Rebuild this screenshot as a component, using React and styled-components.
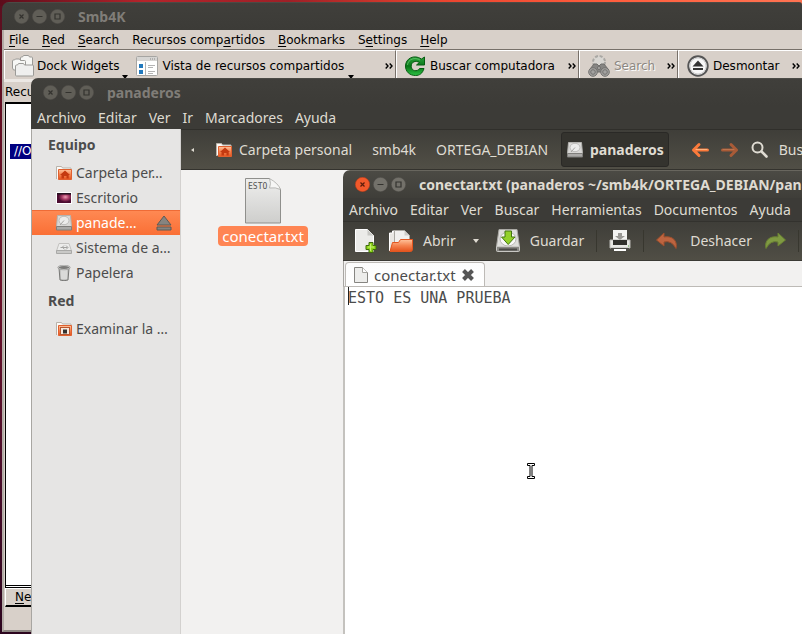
import React from "react";
import styled, { createGlobalStyle, css } from "styled-components";

const GlobalStyle = createGlobalStyle`
  * { box-sizing: border-box; }
  html, body { margin: 0; height: 100%; }
  #root { height: 100%; }
  body { overflow: hidden; background: #2c001e; }
  button, textarea { font: inherit; color: inherit; }
  svg { display: block; flex: none; }
`;

const ubuntu = '"Noto Sans", "Open Sans", sans-serif';
const dejavu = '"DejaVu Sans", sans-serif';

const Desktop = styled.main`
  position: relative;
  min-height: 100vh;
  overflow: hidden;
  background:
    linear-gradient(90deg, #5c0c1b 0, #b5242b 18%, #9e2027 36%, #e9442f 55%, #ff5c3c 75%, #ff7352 100%) top / 100% 6px no-repeat,
    linear-gradient(#5c0f1f, #6b1129 45%, #4a0d2a 75%, #2c051e);
`;

/* ---------- shared pieces ---------- */

const WindowFrame = styled.section`
  position: absolute;
  left: ${(p) => p.$left}px;
  top: ${(p) => p.$top}px;
  right: 0;
  bottom: ${(p) => p.$bottom || 0}px;
  display: flex;
  flex-direction: column;
  overflow: hidden;
  border-radius: 7px ${(p) => (p.$bottom ? 3 : 0)}px 0 0;
  font-family: ${ubuntu};
  font-size: 14px;
  white-space: nowrap;
`;

const TitleBar = styled.header`
  flex: none;
  display: flex;
  align-items: center;
  gap: 3px;
  height: 28px;
  padding: 0 12px 1px;
  border-top: 1px solid ${(p) => (p.$active ? "#68665e" : "#4b4a45")};
  background: linear-gradient(${(p) => (p.$active ? "#4b4a44, #3f3e39" : "#403f3b, #3c3b37")});
  color: ${(p) => (p.$active ? "#dfdbd2" : "#807d78")};
`;

const Title = styled.h1`
  margin: 0;
  padding-left: 10px;
  font-size: 14px;
  font-weight: 700;
`;

const WindowButton = styled.button`
  flex: none;
  width: 15px;
  height: 15px;
  padding: 0;
  border: 0;
  background: none;
`;

const MenuBar = styled.nav`
  flex: none;
  display: flex;
  align-items: center;
  gap: 12px;
  height: 23px;
  padding: 0 6px;
  background: #3c3b37;
  color: #dfdbd2;
`;

const PlainButton = styled.button`
  display: flex;
  align-items: center;
  flex: none;
  padding: 0 ${(p) => p.$pad || 0}px;
  border: 0;
  background: none;
  gap: ${(p) => p.$gap || 0}px;
`;

const Controls = ({ active }) => {
  const kinds = [
    ["Cerrar", "M5.5 5.5l4 4M9.5 5.5l-4 4"],
    ["Minimizar", "M4.5 7.5h6"],
    ["Maximizar", "M5 5h5v5h-5z"],
  ];
  return kinds.map(([name, d], i) => {
    const hot = active && i === 0;
    const fill = hot ? "#f1592b" : active ? "#73716a" : "#605e57";
    return (
      <WindowButton key={name} aria-label={name}>
        <svg width="15" height="15" viewBox="0 0 15 15">
          <circle cx="7.5" cy="7.5" r="7.2" fill={fill} stroke={hot ? "#b83b16" : "#4d4b46"} strokeWidth=".5" />
          <path d={d} fill="none" stroke={hot ? "#5c1c0a" : "#33322e"} strokeWidth="1.2" />
        </svg>
      </WindowButton>
    );
  });
};

/* ---------- icons ---------- */

const FoldersIcon = () => (
  <svg width="22" height="22" viewBox="0 0 22 22" fill="#f7f7f5" stroke="#9b9a97">
    <path d="M8.500 10V3q0-1 1-1h1l1-1.500h5l1 1.500h2q1 0 1 1v9h-12z" />
    <path d="M.5 13V6q0-1 1-1h1l1-1h4l1 1.500h4q1 0 1 1V15h-12z" />
    <path d="M3.500 20V11q0-1 1-1h1l1-1.500h5l1 1.500h8q1 0 1 1v9q0 1-1 1h-16q-1 0-1-1z" fill="#efefee" />
  </svg>
);

const ViewIcon = () => (
  <svg width="22" height="20" viewBox="0 0 22 20">
    <rect x=".5" y=".5" width="21" height="19" rx="1" fill="#fff" stroke="#a6a5a2" />
    <path d="M1 1h20v4H1z" fill="#d6d5d3" />
    <path d="M14 3h1m1 0h1m1 0h1" stroke="#888" />
    <path d="M3 8h4v4H3zM3 14h4v4H3z" fill="#2279bd" />
    <path d="M9.500 6v13M12 9.500h7M12 11.500h5M12 15.500h7M12 17.500h5" stroke="#b4b4b4" />
  </svg>
);

const ReloadIcon = () => (
  <svg width="20" height="20" viewBox="0 0 20 20">
    <defs>
      <linearGradient id="reload" x2="0" y2="1"><stop stopColor="#2ba33d" /><stop offset=".5" stopColor="#087517" /><stop offset="1" stopColor="#2cc043" /></linearGradient>
    </defs>
    <path d="M19.500 1v8h-8l3-2.500C10.500 4 6.200 6 6.200 10.200c0 5 6.300 6 8.300 2.300h4.500C17.500 17.500 14.500 19.500 10.500 19.500 4.500 19.500.5 15.500.5 10 .5 2.500 9-2 16.500 3z" fill="url(#reload)" stroke="#075c12" />
    <path d="M2.500 9C3 3 10 1 15 4" fill="none" stroke="#70cf78" opacity=".7" />
  </svg>
);

const BinocularsIcon = () => (
  <svg width="22" height="22" viewBox="0 0 22 22">
    <circle cx="11" cy="7" r="6" fill="#d8d6d2" stroke="#aaa8a4" strokeWidth="2" strokeDasharray="3 1.700" />
    <path d="M2 14l4-5h3l2 2 2-2h3l4 5v3H2z" fill="#868583" stroke="#6f6e6c" />
    <g fill="#a3a2a0" stroke="#737270">
      <circle cx="5" cy="17" r="4.300" /><circle cx="17" cy="17" r="4.300" />
      <circle cx="5" cy="17" r="2.300" /><circle cx="17" cy="17" r="2.300" />
      <circle cx="11" cy="13" r="1.600" />
    </g>
  </svg>
);

const UnmountIcon = () => (
  <svg width="22" height="22" viewBox="0 0 22 22">
    <circle cx="11" cy="11" r="9.700" fill="#f8f8f8" stroke="#555" strokeWidth="2" />
    <circle cx="11" cy="11" r="8" fill="none" stroke="#d0d0d0" />
    <path d="M11 5.500l5.500 6h-11z" fill="#333" /><path d="M6 14h10" stroke="#333" strokeWidth="2" />
  </svg>
);

const OrangeFolderIcon = ({ house }) => (
  <svg width="16" height="16" viewBox="0 0 16 16">
    <defs><linearGradient id="folder" x2="0" y2="1"><stop stopColor="#ffc39c" /><stop offset=".5" stopColor="#f58450" /><stop offset="1" stopColor="#e4521c" /></linearGradient></defs>
    <path d="M.5 14V1.500h5l1 1.500h8.500v4" fill="#fbfaf8" stroke="#b9b3aa" />
    <path d="M2.500 4.500h13v10h-13z" fill="url(#folder)" stroke="#e0602f" />
    {house ? (
      <path d="M9 5.500l5 4.500h-1.300v3.500h-2.200V11H8v2.500H5.500V10H4z" fill="#c53a10" />
    ) : (
      <><rect x="4.500" y="6.500" width="9" height="7" fill="#f6e9df" stroke="#b8562f" /><path d="M7 8.500h4v4H7z" fill="#34322f" /></>
    )}
  </svg>
);

const ScreenIcon = () => (
  <svg width="16" height="16" viewBox="0 0 16 16">
    <defs><radialGradient id="screen" cx=".6" cy=".4"><stop stopColor="#ee9db4" /><stop offset=".5" stopColor="#a83c66" /><stop offset="1" stopColor="#4c0d31" /></radialGradient></defs>
    <path d="M0 2h16v12H0z" fill="#fff" /><path d="M1 3h14v10H1z" fill="url(#screen)" /><path d="M1 3h14v1.500H1z" fill="#251220" />
  </svg>
);

const DriveIcon = ({ flat }) => (
  <svg width="16" height="16" viewBox="0 0 16 16">
    {flat ? (
      <>
        <path d="M3 3.500h10l2.500 7.500H.5z" fill="#ececeb" stroke="#c2c1bf" />
        <path d="M.5 10.500h15v3H.5z" fill="#c9c9c7" stroke="#a9a9a7" />
        <path d="M4.500 7.500h7M10 5.500l2 2-2 2M6 7.500l2-2M6.500 7.500l2 1.700" fill="none" stroke="#a2a2a0" />
      </>
    ) : (
      <>
        <path d="M1.500 .5h13l1 11H.5z" fill="#d9d8d6" stroke="#b3b2af" />
        <ellipse cx="8" cy="5.500" rx="5" ry="4.200" fill="#ececeb" stroke="#bdbcba" />
        <path d="M8 5.500l-4 4.500" stroke="#a4a3a1" />
        <path d="M.5 11.500h15v3.500H.5z" fill="#aaa9a7" stroke="#7f7e7b" />
      </>
    )}
  </svg>
);

const TrashIcon = () => (
  <svg width="16" height="16" viewBox="0 0 16 16">
    <path d="M3 3l1 12q4 1.500 8 0l1-12z" fill="#c4c4c2" stroke="#777775" />
    <path d="M6 5v9M8 5v9M10 5v9" stroke="#efefee" /><ellipse cx="8" cy="2.500" rx="5.800" ry="2" fill="#7b7b79" stroke="#dededc" />
    <ellipse cx="8" cy="2.500" rx="6.200" ry="2.300" fill="none" stroke="#888886" strokeWidth=".6" />
  </svg>
);

const EjectIcon = () => (
  <svg width="16" height="16" viewBox="0 0 16 16" fill="#868480" stroke="#5d5a55">
    <path d="M8 1l7 9H1z" /><path d="M1 12h14v3H1z" />
  </svg>
);

const SheetIcon = () => (
  <svg width="36" height="46" viewBox="0 0 36 46">
    <defs><linearGradient id="sheet" x2="0" y2="1"><stop stopColor="#eeeeed" /><stop offset="1" stopColor="#cececc" /></linearGradient></defs>
    <path d="M.5 .5h24q4 5 11 10.500v34H.5z" fill="url(#sheet)" stroke="#8f8f8c" />
    <path d="M24.500 .5q2 5 0 9.500 6-1 11 1.500-2-6-11-11z" fill="#f6f6f5" stroke="#aaa9a7" strokeWidth=".8" />
  </svg>
);

const NewIcon = () => (
  <svg width="22" height="24" viewBox="0 0 22 24">
    <path d="M.5 .5h12l6 6v16H.5z" fill="#ebebe9" stroke="#fff" /><path d="M12.500 .5v6h6z" fill="#c7c7c4" />
    <path d="M14 13.500h4v3h3v4h-3v3h-4v-3h-3v-4h3z" fill="#8fd51c" stroke="#3d6b0b" /><path d="M15.500 15v7M13 18h6" stroke="#c6ef71" />
  </svg>
);

const OpenIcon = () => (
  <svg width="24" height="24" viewBox="0 0 24 24">
    <path d="M.5 22V4h3V2h7v2" fill="#e9e7e3" stroke="#fff" /><path d="M5.500 1.500h10l5 5V15h-15z" fill="#f1f0ee" stroke="#aaa8a2" />
    <path d="M15.500 1.500v5h5z" fill="#cfcdc9" />
    <path d="M1 22.500L3.500 13.500h6l2-3h12V20q0 2.500-2 2.500z" fill="url(#folder)" stroke="#e4561f" />
  </svg>
);

const SaveIcon = () => (
  <svg width="24" height="24" viewBox="0 0 24 24">
    <path d="M3 .5h18l2.500 17H.5z" fill="#dededb" stroke="#aaa9a4" /><ellipse cx="12" cy="10" rx="8" ry="7" fill="#f8f8f7" stroke="#b7b6b3" />
    <path d="M.5 17.500h23v4q0 1-1 1h-21q-1 0-1-1z" fill="#888783" stroke="#c9c8c4" /><path d="M3 20.500h18" stroke="#4b4a47" strokeWidth="2" />
    <path d="M9 2h6.500v6h3.500l-6.800 7.500L5.500 8H9z" fill="#93d12a" stroke="#447610" />
  </svg>
);

const PrintIcon = () => (
  <svg width="22" height="22" viewBox="0 0 22 22">
    <path d="M4 0h14v12H4z" fill="#f3f3f1" /><path d="M9 3h4v3h3l-5 4-5-4h3z" fill="#999894" />
    <path d="M1 10h20v8H1z" fill="#e6e6e3" stroke="#b9b8b4" /><path d="M4 10h14v5H4z" fill="#302f2c" />
    <path d="M2 18h18v2H2z" fill="#4e4d49" /><path d="M5 19h12v2H5z" fill="#fff" /><path d="M19 16h1" stroke="#52aa38" />
  </svg>
);

const CurvedArrow = ({ redo }) => (
  <svg width="22" height="20" viewBox="0 0 22 20">
    <path
      d={redo ? "M14 2l7.500 7-7.500 6v-4Q6.500 9 2 17.500C0 9.500 6 4.500 14 6z" : "M8 2L.5 9 8 15v-4q7.500-2 12 6.500C22 9.500 16 4.500 8 6z"}
      fill={redo ? "#7f9a42" : "#bd6440"}
      stroke={redo ? "#6a8033" : "#9c4f2d"}
      strokeLinejoin="round"
    />
  </svg>
);

const StraightArrow = ({ forward }) => (
  <svg width="18" height="16" viewBox="0 0 18 16" fill="none" strokeLinecap="round" strokeLinejoin="round">
    <g stroke={forward ? "#a95b37" : "#fb7a3b"} strokeWidth="3">
      <path d={forward ? "M1.500 8h14M10 2.500L15.500 8 10 13.500" : "M16.500 8h-14M8 2.500L2.500 8 8 13.500"} />
    </g>
    <path d={forward ? "M2 7.500h11" : "M5 7.500h11"} stroke={forward ? "#bb744e" : "#ffb27e"} />
  </svg>
);

const SearchIcon = () => (
  <svg width="17" height="17" viewBox="0 0 17 17" fill="none" stroke="#dfdbd2">
    <circle cx="6.500" cy="6.500" r="5" strokeWidth="2" /><path d="M10.500 10.500l5 5" strokeWidth="2.600" strokeLinecap="round" />
  </svg>
);

const SmallSheet = () => (
  <svg width="14" height="16" viewBox="0 0 14 16">
    <path d="M.5 .5h8l5 5v10H.5z" fill="#ededeb" stroke="#868581" /><path d="M8.500 .5v5h5" fill="#fff" stroke="#a5a49f" />
  </svg>
);

const Chevron = () => (
  <svg width="8" height="6" viewBox="0 0 8 6" fill="none" stroke="#000" strokeWidth="1.400"><path d="M.7 .5L3 3 .7 5.500M4.700 .5L7 3 4.700 5.500" /></svg>
);

const DropArrow = styled.span`
  flex: none;
  align-self: ${(p) => (p.$low ? "flex-end" : "center")};
  border-top: 4px solid currentColor;
  border-left: 3px solid transparent;
  border-right: 3px solid transparent;
`;

/* ---------- Smb4K ---------- */

const SmbBody = styled.div`
  flex: 1;
  display: flex;
  flex-direction: column;
  border-left: 2px solid #b3aca6;
  border-bottom: 2px solid #8b8580;
  background: #d8d0c9;
  color: #000;
  font: 12px/16px ${dejavu};
`;

const SmbMenu = styled.nav`
  flex: none;
  display: flex;
  align-items: center;
  gap: 13px;
  height: 20px;
  padding: 0 5px;
  border-bottom: 1px solid #777069;
`;

const Mnemonic = styled.u`
  text-underline-offset: 2px;
  text-decoration-thickness: 1px;
  text-decoration-skip-ink: none;
`;

const SmbToolbar = styled.div`
  flex: none;
  display: grid;
  grid-template-columns: 392px 183px 99px minmax(0, 1fr);
  height: 32px;
  border-bottom: 3px solid #ece8e4;
`;

const ToolGroup = styled.div`
  display: flex;
  align-items: center;
  gap: 8px;
  padding: 2px 2px 0 8px;
  border-left: 1px solid #fff;
  border-top: 1px solid #fff;
  border-right: 1px solid #777069;

  &:first-child {
    padding-left: 7px;
  }

  &:last-child {
    border-right: 0;
  }
`;

const SmbTool = styled(PlainButton)`
  height: 26px;
  color: ${(p) => (p.disabled ? "#8d8882" : "#000")};
  text-shadow: ${(p) => (p.disabled ? "1px 1px #fff" : "none")};
`;

const Overflow = styled(PlainButton)`
  margin-left: auto;
`;

const DockTitle = styled.h2`
  flex: none;
  margin: 0;
  padding: 0 1px;
  height: 20px;
  font: 12px/20px ${dejavu};
`;

const ShareTree = styled.div`
  flex: 1;
  border: 2px solid #000;
  border-left-width: 1px;
  border-bottom: 3px double #000;
  margin-left: 1px;
  background: #fff;
  padding: 40px 4px;
`;

const ShareItem = styled.div`
  width: 120px;
  padding: 0 4px;
  background: #000080;
  color: #fff;
  font: 12px/15px ${dejavu};
`;

const DockFooter = styled.footer`
  flex: none;
  height: 42px;
  padding-left: 1px;
`;

const RaisedTab = styled.button`
  height: 19px;
  width: 90px;
  padding: 0 9px;
  text-align: left;
  background: #d8d0c9;
  border: 1px solid #fff;
  border-bottom: 2px solid #000;
`;

const smbMenus = [
  ["", "F", "ile"], ["", "R", "ed"], ["", "S", "earch"], ["Recursos comp", "a", "rtidos"],
  ["", "B", "ookmarks"], ["S", "e", "ttings"], ["", "H", "elp"],
];

const More = () => <Overflow aria-label="Más"><Chevron /></Overflow>;

const Smb4k = () => (
  <WindowFrame $left={2} $top={2} $bottom={2}>
    <TitleBar>
      <Controls />
      <Title>Smb4K</Title>
    </TitleBar>
    <SmbBody>
      <SmbMenu>
        {smbMenus.map(([a, b, c]) => (
          <PlainButton key={a + b + c}><span>{a}<Mnemonic>{b}</Mnemonic>{c}</span></PlainButton>
        ))}
      </SmbMenu>
      <SmbToolbar>
        <ToolGroup>
          <SmbTool $gap={3}><FoldersIcon />Dock Widgets<DropArrow $low /></SmbTool>
          <SmbTool $gap={4}><ViewIcon />Vista de recursos compartidos<DropArrow $low /></SmbTool>
          <More />
        </ToolGroup>
        <ToolGroup><SmbTool $gap={5}><ReloadIcon />Buscar computadora</SmbTool><More /></ToolGroup>
        <ToolGroup><SmbTool $gap={4} disabled><BinocularsIcon />Search</SmbTool><More /></ToolGroup>
        <ToolGroup><SmbTool $gap={4}><UnmountIcon />Desmontar</SmbTool><More /></ToolGroup>
      </SmbToolbar>
      <DockTitle>Recursos compartidos</DockTitle>
      <ShareTree><ShareItem>//ORTEGA_DEBIAN</ShareItem></ShareTree>
      <DockFooter><RaisedTab><Mnemonic>N</Mnemonic>etwork</RaisedTab></DockFooter>
    </SmbBody>
  </WindowFrame>
);

/* ---------- file manager ---------- */

const FilesBody = styled.div`
  flex: 1;
  display: grid;
  grid-template-columns: 149px minmax(0, 1fr);
  border-left: 1px solid #a8a6a2;
  background: #f2f1f0;
`;

const Sidebar = styled.aside`
  background: #e6e5e4;
  border-right: 1px solid #d3d1cf;
  color: #4c4c4c;
`;

const PlaceHeading = styled.h2`
  margin: 0;
  padding-left: 16px;
  font-size: 14px;
  font-weight: 700;
  line-height: 31px;
`;

const Place = styled.button`
  display: flex;
  align-items: center;
  gap: 4px;
  width: 100%;
  height: 25px;
  padding: 0 8px 0 24px;
  border: 0;
  background: none;
  text-align: left;
  ${(p) => p.$selected && css`
    background: linear-gradient(#ff8a54, #fa6f35);
    box-shadow: inset 0 1px #ef6b36;
    color: #fff;
  `}
`;

const PlaceName = styled.span`
  flex: 1;
`;

const PathBar = styled.div`
  display: flex;
  align-items: center;
  height: 41px;
  padding-left: 10px;
  border-top: 1px solid #302f2b;
  border-bottom: 1px solid #34332e;
  background: linear-gradient(#3f3e39, #514f46);
  color: #dfdbd2;
`;

const LeftMark = styled.span`
  margin-right: 22px;
  border: 2px solid transparent;
  border-left: 0;
  border-right: 3px solid #dfdbd2;
`;

const Crumbs = styled.nav`
  display: flex;
  align-items: center;
  gap: 20px;
`;

const Crumb = styled(PlainButton)`
  gap: 7px;
  ${(p) => p.$current && css`
    height: 35px;
    padding: 0 4px 0 5px;
    border: 1px solid #2a2926;
    border-radius: 3px;
    background: #34332e;
    font-weight: 700;
    margin-left: -7px;
  `}
`;

const Tools = styled.div`
  display: flex;
  align-items: center;
  gap: 12px;
  margin-left: 22px;
`;

const FileItem = styled.figure`
  display: flex;
  flex-direction: column;
  align-items: center;
  gap: 2px;
  width: 90px;
  margin: 8px 37px;
`;

const FileArt = styled.div`
  position: relative;
`;

const Snippet = styled.span`
  position: absolute;
  left: 3px;
  top: 4px;
  color: #555;
  font: 8px/10px "DejaVu Sans Mono", monospace;
`;

const FileName = styled.figcaption`
  align-self: stretch;
  text-align: center;
  border-radius: 4px;
  background: #ff8553;
  color: #fff;
  font-size: 15px;
  line-height: 20px;
`;

const places = [
  { name: "Carpeta per…", icon: <OrangeFolderIcon house /> },
  { name: "Escritorio", icon: <ScreenIcon /> },
  { name: "panade…", icon: <DriveIcon />, selected: true },
  { name: "Sistema de a…", icon: <DriveIcon flat /> },
  { name: "Papelera", icon: <TrashIcon /> },
];

const Files = () => (
  <WindowFrame $left={31} $top={78}>
    <TitleBar>
      <Controls />
      <Title>panaderos</Title>
    </TitleBar>
    <MenuBar>
      {["Archivo", "Editar", "Ver", "Ir", "Marcadores", "Ayuda"].map((m) => <PlainButton key={m}>{m}</PlainButton>)}
    </MenuBar>
    <FilesBody>
      <Sidebar>
        <PlaceHeading>Equipo</PlaceHeading>
        {places.map((p) => (
          <Place key={p.name} $selected={p.selected}>
            {p.icon}<PlaceName>{p.name}</PlaceName>{p.selected && <EjectIcon />}
          </Place>
        ))}
        <PlaceHeading>Red</PlaceHeading>
        <Place><OrangeFolderIcon /><PlaceName>Examinar la …</PlaceName></Place>
      </Sidebar>
      <div>
        <PathBar>
          <LeftMark />
          <Crumbs>
            <Crumb><OrangeFolderIcon house />Carpeta personal</Crumb>
            <Crumb>smb4k</Crumb>
            <Crumb>ORTEGA_DEBIAN</Crumb>
            <Crumb $current><DriveIcon />panaderos</Crumb>
          </Crumbs>
          <Tools>
            <PlainButton aria-label="Atrás"><StraightArrow /></PlainButton>
            <PlainButton aria-label="Adelante"><StraightArrow forward /></PlainButton>
            <PlainButton $gap={11}><SearchIcon />Buscar</PlainButton>
          </Tools>
        </PathBar>
        <FileItem>
          <FileArt><SheetIcon /><Snippet>ESTO</Snippet></FileArt>
          <FileName>conectar.txt</FileName>
        </FileItem>
      </div>
    </FilesBody>
  </WindowFrame>
);

/* ---------- text editor ---------- */

const EditorToolbar = styled.div`
  flex: none;
  display: flex;
  align-items: center;
  gap: 12px;
  height: 40px;
  padding: 0 12px 1px;
  border-top: 1px solid #33322e;
  border-bottom: 1px solid #3a3934;
  background: linear-gradient(#3f3e39, #504e45);
  color: #dfdbd2;
`;

const Separator = styled.span`
  flex: none;
  width: 1px;
  height: 22px;
  background: #38372f;
`;

const TabStrip = styled.div`
  flex: none;
  display: flex;
  height: 26px;
  padding: 1px 1px 0;
  border-left: 1px solid #a8a6a2;
  border-bottom: 1px solid #bdbab6;
  background: #f2f1f0;
`;

const Tab = styled.div`
  display: flex;
  align-items: center;
  gap: 6px;
  width: 140px;
  height: 24px;
  padding: 0 8px;
  border: 1px solid #bdbab6;
  border-bottom: 0;
  border-radius: 4px 4px 0 0;
  background: linear-gradient(#fcfcfc, #fff);
  color: #4c4c4c;
  font-size: 15px;
`;

const TextPane = styled.div`
  position: relative;
  flex: 1;
  display: flex;
  border-left: 2px solid #c4c2be;
  background: #fff;
`;

const TextArea = styled.textarea`
  flex: 1;
  padding: 1px 3px;
  border: 0;
  outline: 0;
  resize: none;
  background: none;
  color: #4c4c4c;
  font: 15px/20px "DejaVu Sans Mono", monospace;
`;

const Caret = styled.span`
  position: absolute;
  left: 3px;
  top: 0;
  width: 1px;
  height: 18px;
  background: #222;
`;

const Pointer = styled.svg`
  position: absolute;
  left: 527px;
  top: 463px;
`;

const Editor = () => (
  <WindowFrame $left={343} $top={170}>
    <TitleBar $active>
      <Controls active />
      <Title>conectar.txt (panaderos ~/smb4k/ORTEGA_DEBIAN/panaderos) - gedit</Title>
    </TitleBar>
    <MenuBar>
      {["Archivo", "Editar", "Ver", "Buscar", "Herramientas", "Documentos", "Ayuda"].map((m) => <PlainButton key={m}>{m}</PlainButton>)}
    </MenuBar>
    <EditorToolbar>
      <PlainButton aria-label="Nuevo"><NewIcon /></PlainButton>
      <PlainButton $gap={10}><OpenIcon />Abrir</PlainButton>
      <PlainButton aria-label="Recientes" $pad={5}><DropArrow /></PlainButton>
      <PlainButton $gap={10}><SaveIcon />Guardar</PlainButton>
      <Separator />
      <PlainButton aria-label="Imprimir"><PrintIcon /></PlainButton>
      <Separator />
      <PlainButton $gap={12}><CurvedArrow />Deshacer</PlainButton>
      <PlainButton aria-label="Rehacer"><CurvedArrow redo /></PlainButton>
      <Separator />
    </EditorToolbar>
    <TabStrip>
      <Tab>
        <SmallSheet />conectar.txt
        <PlainButton aria-label="Cerrar pestaña">
          <svg width="12" height="12" viewBox="0 0 12 12" stroke="#555" strokeWidth="4"><path d="M1.500 1.500l9 9M10.500 1.500l-9 9" /></svg>
        </PlainButton>
      </Tab>
    </TabStrip>
    <TextPane>
      <TextArea aria-label="Documento" defaultValue="ESTO ES UNA PRUEBA" spellCheck={false} />
      <Caret />
    </TextPane>
  </WindowFrame>
);

export default function App() {
  return (
    <Desktop>
      <GlobalStyle />
      <Smb4k />
      <Files />
      <Editor />
      <Pointer width="8" height="16" viewBox="0 0 8 16">
        <path d="M.5 .5h7v2H5v11h2.500v2H.5v-2H3v-11H.5z" fill="#fff" stroke="#000" />
      </Pointer>
    </Desktop>
  );
}
